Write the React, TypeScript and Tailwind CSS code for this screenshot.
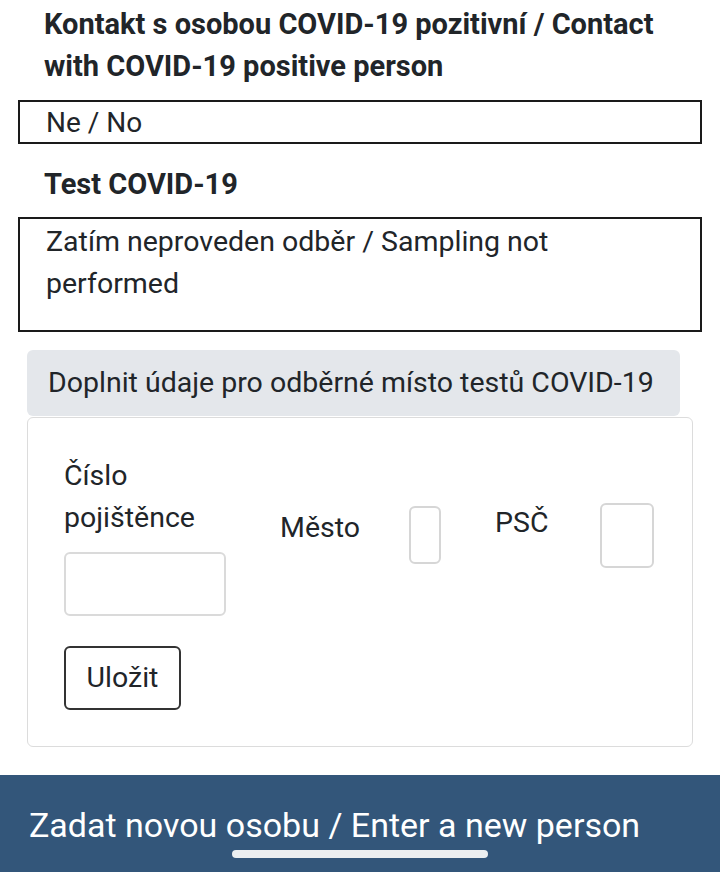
export default function App() {
  return (
    <div className="flex min-h-[872px] flex-col bg-white font-['Roboto',sans-serif] text-[#212529]">
      <h2 className="px-[44px] pt-[3px] text-[29px] font-bold leading-[42px]">
        Kontakt s osobou COVID-19 pozitivní / Contact with COVID-19 positive person
      </h2>

      <div className="mx-[18px] mt-[13px] border-2 border-[#1a1a1a] pl-[26px] pr-[26px] pt-[2px] text-[28px] leading-[38px]">
        Ne / No
      </div>

      <h2 className="mt-[19px] px-[44px] text-[29px] font-bold leading-[42px]">
        Test COVID-19
      </h2>

      <div className="mx-[18px] mt-[12px] h-[115px] border-2 border-[#1a1a1a] pl-[26px] pr-[100px] pt-[2px] text-[28.5px] leading-[42px]">
        Zatím neproveden odběr / Sampling not performed
      </div>

      <div className="ml-[27px] mr-[40px] mt-[18px] flex h-[66px] items-center rounded-md bg-[#e4e7eb] pl-[21px] text-[28.5px]">
        Doplnit údaje pro odběrné místo testů COVID-19
      </div>

      <div className="ml-[27px] mr-[27px] mt-px rounded-md border border-[#dcdcdc] px-[36px] pb-[36px] pt-[37px]">
        <div className="flex items-start text-[28.5px] leading-[42px]">
          <div className="flex w-[162px] flex-col">
            <label>
              Číslo
              <br />
              pojištěnce
            </label>
            <input className="mt-[13px] h-[64px] w-[162px] rounded-md border-2 border-[#dadada]" />
          </div>
          <label className="ml-[54px] mt-[52px]">Město</label>
          <input className="ml-[49px] mt-[51px] h-[58px] w-[32px] rounded-md border-2 border-[#d6d6d6]" />
          <label className="ml-[54px] mt-[47px]">PSČ</label>
          <input className="ml-[52px] mt-[48px] h-[65px] w-[54px] rounded-md border-2 border-[#d6d6d6]" />
        </div>
        <button className="mt-[30px] flex h-[64px] w-[117px] items-center justify-center rounded-md border-2 border-[#333] text-[28.5px]">
          Uložit
        </button>
      </div>

      <div className="mt-[28px] flex h-[98px] flex-col bg-[#33567a] text-white">
        <div className="pl-[29px] pt-[28px] text-[34px] leading-[44px]">
          Zadat novou osobu / Enter a new person
        </div>
        <div className="mx-auto mt-[3px] h-[8px] w-[256px] rounded-full bg-[#eceef0]" />
      </div>
    </div>
  );
}
